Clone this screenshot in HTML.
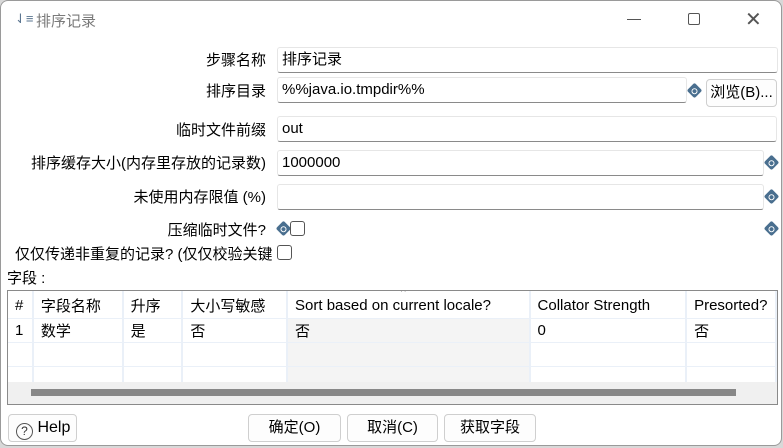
<!DOCTYPE html>
<html><head><meta charset="utf-8"><style>
*{box-sizing:border-box;margin:0;padding:0}
body{width:783px;height:448px;overflow:hidden;background:#d8d8d8;font-family:"Liberation Sans","Noto Sans CJK SC",sans-serif;font-size:15px;color:#000;position:relative}
.win{position:absolute;left:0;top:0;width:782px;height:446px;background:#fff;border:1px solid #9a9a9a;border-radius:8px;overflow:hidden}
.a{position:absolute;white-space:nowrap}
.lbl{position:absolute;right:515px;white-space:nowrap;text-align:right}
.in{position:absolute;background:#fff;border:1px solid #e6e6e6;border-bottom:1px solid #8a8a8a;border-radius:3px;padding-left:4px;line-height:24px}
.dol{position:absolute;width:11px;height:11px;transform:rotate(45deg);background:#4a6f8f;border-radius:2px}
.dol::after{content:"";position:absolute;left:3px;top:3px;width:4px;height:4px;border:1px solid #fff;border-radius:50%}
.cb{position:absolute;width:15px;height:15px;border:1px solid #555;border-radius:3px;background:#fff}
.btn{position:absolute;height:28px;border:1px solid #cfcfcf;border-radius:4px;background:#fdfdfd;text-align:center;line-height:26px}
table{border-collapse:collapse;position:absolute;left:0;top:0}
td{height:24px;padding-left:7px;border-right:2px solid #eaf0f8;border-bottom:1px solid #eaf0f8;white-space:nowrap}
tr.h td{height:27px;padding-top:2px}
</style></head><body><div class="win">
<div class="a" style="left:14px;top:10px;color:#5a7590;font-size:13px">⇃≡</div>
<div class="a" style="left:35px;top:9px;color:#7a7a7a">排序记录</div>
<div class="a" style="left:626px;top:18px;width:14px;height:1px;background:#555"></div>
<div class="a" style="left:687px;top:12px;width:12px;height:12px;border:1px solid #555;border-radius:2px"></div>
<div class="a" style="left:744px;top:6px;font-size:20px;color:#555;font-weight:200">✕</div>

<div class="lbl" style="top:48px">步骤名称</div>
<div class="in" style="left:276px;top:46px;width:501px;height:26px">排序记录</div>
<div class="lbl" style="top:79px">排序目录</div>
<div class="in" style="left:276px;top:76px;width:410px;height:26px">%%java.io.tmpdir%%</div>
<div class="dol" style="left:688px;top:84px"></div>
<div class="btn" style="left:705px;top:78px;width:71px">浏览(B)...</div>
<div class="lbl" style="top:118px">临时文件前缀</div>
<div class="in" style="left:276px;top:115px;width:500px;height:26px">out</div>
<div class="lbl" style="top:151px">排序缓存大小(内存里存放的记录数)</div>
<div class="in" style="left:276px;top:149px;width:487px;height:26px">1000000</div>
<div class="dol" style="left:765px;top:156px"></div>
<div class="lbl" style="top:185px">未使用内存限值 (%)</div>
<div class="in" style="left:276px;top:183px;width:487px;height:26px"></div>
<div class="dol" style="left:765px;top:190px"></div>
<div class="lbl" style="top:218px">压缩临时文件?</div>
<div class="dol" style="left:277px;top:222px"></div>
<div class="cb" style="left:289px;top:220px"></div>
<div class="dol" style="left:765px;top:222px"></div>
<div class="a" style="left:14px;top:242px">仅仅传递非重复的记录? (仅仅校验关键</div>
<div class="cb" style="left:276px;top:244px"></div>
<div class="a" style="left:6px;top:266px">字段 :</div>

<div class="a" style="left:6px;top:289px;width:771px;height:115px;border:1px solid #8a8a8a;overflow:hidden">
<table>
<tr class="h"><td style="width:25px">#</td><td style="width:90px">字段名称</td><td style="width:60px">升序</td><td style="width:105px">大小写敏感</td><td style="width:243px;position:relative">Sort based on current locale?<span style="position:absolute;left:113px;top:-4px;font-size:10px;color:#666">^</span></td><td style="width:157px">Collator Strength</td><td style="width:90px">Presorted?</td></tr>
<tr><td>1</td><td>数学</td><td>是</td><td>否</td><td style="background:#f4f4f4">否</td><td>0</td><td>否</td></tr>
<tr><td></td><td></td><td></td><td></td><td style="background:#f4f4f4"></td><td></td><td></td></tr>
<tr><td></td><td></td><td></td><td></td><td style="background:#f4f4f4"></td><td></td><td></td></tr>
</table>
<div class="a" style="left:0;top:91px;width:771px;height:24px;background:#f0f0f0"></div>
<div class="a" style="left:23px;top:98px;width:705px;height:7px;background:#888"></div>
</div>

<div class="btn" style="left:7px;top:413px;width:69px;text-align:left;padding-left:7px;font-size:16px"><span style="display:inline-block;width:17px;height:17px;border:1.5px solid #555;border-radius:50%;font-size:12px;line-height:14px;text-align:center;vertical-align:-3px;color:#333">?</span> Help</div>
<div class="btn" style="left:247px;top:413px;width:93px">确定(O)</div>
<div class="btn" style="left:346px;top:413px;width:91px">取消(C)</div>
<div class="btn" style="left:443px;top:413px;width:92px">获取字段</div>
</div></body></html>
